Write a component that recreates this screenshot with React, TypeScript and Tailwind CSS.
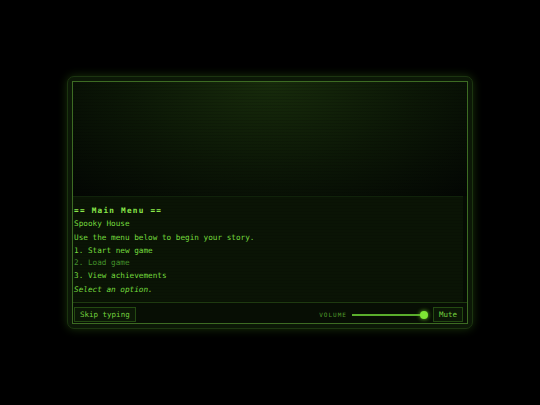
import { useState } from 'react';

const MENU = [
  { text: '1. Start new game', dim: false },
  { text: '2. Load game', dim: true },
  { text: '3. View achievements', dim: false },
];

export default function App() {
  const [volume] = useState(100);

  return (
    <div className="w-[540px] h-[405px] bg-black flex items-center justify-center font-['DejaVu_Sans_Mono',monospace]">
      {/* Monitor bezel */}
      <div className="w-[406px] h-[253px] rounded-[7px] border border-[#1c3510] bg-[#0c1807] p-[4px] shadow-[0_0_10px_rgba(70,140,30,0.35)]">
        <div className="h-full flex flex-col border border-[#3d6b23] bg-[#050b03]">
          {/* Screen glow area */}
          <div className="h-[114px] bg-[radial-gradient(ellipse_at_50%_0%,#172b0b_0%,#0b1606_55%,#030603_100%)] relative">
            <div className="absolute inset-0 bg-[repeating-linear-gradient(180deg,rgba(0,0,0,0)_0px,rgba(0,0,0,0)_2px,rgba(0,0,0,0.25)_3px)]" />
          </div>

          {/* Text log */}
          <div className="h-[106px] mr-[4px] border-t border-[#10220a] bg-[#0a1405] relative flex flex-col pt-[7px] text-[7.7px] leading-[13px] text-[#74da3d]">
            <div className="absolute inset-0 bg-[repeating-linear-gradient(180deg,rgba(0,0,0,0)_0px,rgba(0,0,0,0)_2px,rgba(0,0,0,0.22)_3px)]" />
            <div className="relative pl-[1px]">
              <p className="font-bold tracking-[1.25px] text-[#8be84a]">== Main Menu ==</p>
              <p>Spooky House</p>
              <p className="mt-[1px]">Use the menu below to begin your story.</p>
              <div className="mt-[0.5px] flex flex-col gap-[0.25px]">
                {MENU.map((item) => (
                  <p key={item.text} className={item.dim ? 'text-[#42902a] leading-[12.5px]' : 'leading-[12.5px]'}>
                    {item.text}
                  </p>
                ))}
              </div>
              <p className="italic">Select an option.</p>
            </div>
          </div>

          {/* Controls */}
          <div className="flex-1 border-t border-[#1e3a10] bg-[#070e04] flex items-end justify-between pb-[1px] pl-[1px] pr-[4px]">
            <button className="h-[15px] px-[5px] border border-[#244a12] bg-[#0b1706] text-[7.5px] text-[#74d23e] font-['DejaVu_Sans_Mono',monospace]">
              Skip typing
            </button>
            <div className="flex items-center h-[15px]">
              <span className="text-[6px] tracking-[1px] text-[#4f9a2a] mr-[5px]">VOLUME</span>
              <div className="w-[73px] h-[2px] bg-[#5aae2c] relative mr-[8px]">
                <div
                  className="absolute top-[-3px] w-[8px] h-[8px] rounded-full bg-[#7ee635] shadow-[0_0_4px_#6fd02a]"
                  style={{ left: `calc(${volume}% - 5px)` }}
                />
              </div>
              <button className="h-[15px] px-[5px] border border-[#244a12] bg-[#0b1706] text-[7.5px] text-[#74d23e] font-['DejaVu_Sans_Mono',monospace]">
                Mute
              </button>
            </div>
          </div>
        </div>
      </div>
    </div>
  );
}
